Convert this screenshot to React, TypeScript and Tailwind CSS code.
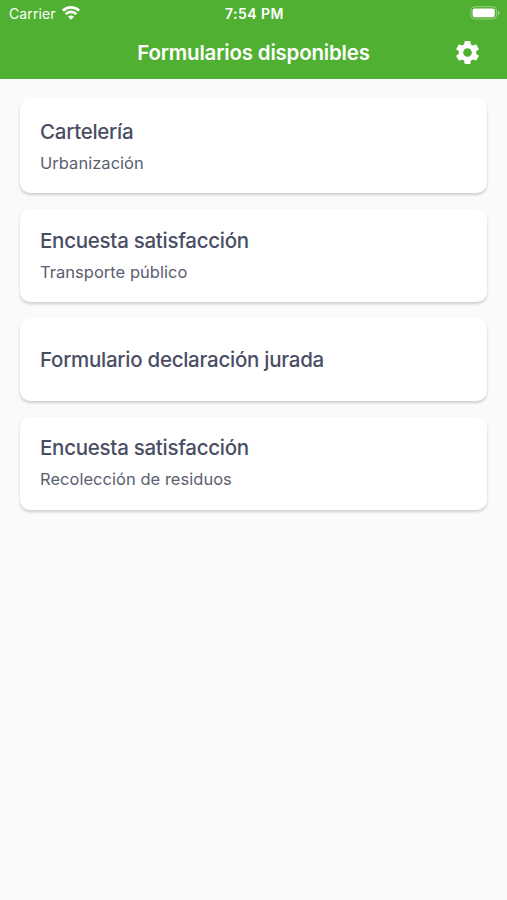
import clsx from "clsx";
import { MdSettings } from "react-icons/md";

type Form = {
  id: number;
  title: string;
  category?: string;
  size: string;
};

const forms: Form[] = [
  { id: 1, title: "Cartelería", category: "Urbanización", size: "h-[95px] pt-[20px]" },
  { id: 2, title: "Encuesta satisfacción", category: "Transporte público", size: "h-[93px] pt-[18px]" },
  { id: 3, title: "Formulario declaración jurada", size: "h-[83px] pt-[28px]" },
  { id: 4, title: "Encuesta satisfacción", category: "Recolección de residuos", size: "h-[93px] pt-[17px]" },
];

function WifiIcon() {
  return (
    <svg width="18" height="14" viewBox="0 0 18 14" fill="none" stroke="white" strokeWidth="2.7">
      <path d="M0.9 4.7a11.6 11.6 0 0 1 16.2 0" />
      <path d="M3.7 8.1a7.5 7.5 0 0 1 10.6 0" />
      <path d="M9 13.7 6 10.7a4.2 4.2 0 0 1 6 0Z" fill="white" stroke="none" />
    </svg>
  );
}

function BatteryIcon() {
  return (
    <svg width="30" height="14" viewBox="0 0 30 14">
      <rect x="0.9" y="0.7" width="25.6" height="12.3" rx="3.8" fill="none" stroke="white" strokeOpacity="0.4" />
      <rect x="2.6" y="2.4" width="22.2" height="8.9" rx="2.2" fill="white" />
      <path d="M28 4.8v4.2c.9-.4 1.5-1.2 1.5-2.1S28.9 5.2 28 4.8Z" fill="white" fillOpacity="0.5" />
    </svg>
  );
}

function StatusBar() {
  return (
    <div className="grid h-[26px] grid-cols-3 items-center pr-[7px] pl-[9px] text-white">
      <div className="flex items-center gap-[6px]">
        <span className="text-[14px] tracking-[0.12px]">Carrier</span>
        <WifiIcon />
      </div>
      <span className="pt-px text-center text-[14px] font-semibold tracking-[0.45px]">7:54 PM</span>
      <div className="flex justify-end">
        <BatteryIcon />
      </div>
    </div>
  );
}

function Header() {
  return (
    <header className="h-[79px] bg-[#50b031]">
      <StatusBar />
      <div className="grid h-[52px] grid-cols-[1fr_auto_1fr] items-center">
        <h1 className="col-start-2 pt-[2px] text-[20.5px] font-semibold tracking-[-0.2px] text-white">
          Formularios disponibles
        </h1>
        <button className="mr-[25px] justify-self-end text-white" aria-label="Ajustes">
          <MdSettings size={29} />
        </button>
      </div>
    </header>
  );
}

function FormCard({ form }: { form: Form }) {
  return (
    <li className={clsx("rounded-[10px] bg-white px-5 shadow-[0_2px_3px_rgba(0,0,0,0.18)]", form.size)}>
      <h2 className="text-[20.5px] leading-[28px] font-medium tracking-[-0.27px] text-[#4a4e64]">
        {form.title}
      </h2>
      {form.category && (
        <p className="pt-[5px] text-[16.5px] leading-[24px] tracking-[0.03px] text-[#5c6070]">{form.category}</p>
      )}
    </li>
  );
}

export default function App() {
  return (
    <div className="h-[900px] bg-[#fafafa] font-['Inter',sans-serif]">
      <Header />
      <ul className="flex flex-col gap-4 px-5 pt-[19px]">
        {forms.map((form) => (
          <FormCard key={form.id} form={form} />
        ))}
      </ul>
    </div>
  );
}
